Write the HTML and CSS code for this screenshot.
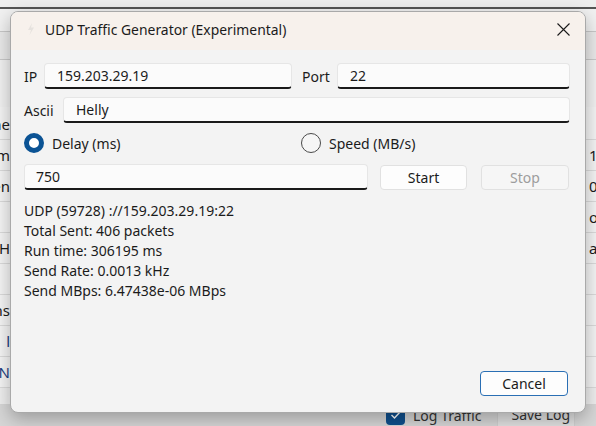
FILE: index.html
```html
<!DOCTYPE html>
<html>
<head>
<meta charset="utf-8">
<link rel="stylesheet" href="styles.css">
</head>
<body>
<div class="app">
  <div class="app-top"></div>
  <div class="app-head">
    <div class="head-a"></div>
    <div class="head-b"></div>
  </div>
  <div class="rows">
    <div class="row"><div class="lc"><span>Name</span></div><div class="rc"><span></span></div></div>
    <div class="row"><div class="lc"><span>Stream</span></div><div class="rc"><span>1'</span></div></div>
    <div class="row"><div class="lc"><span>Open</span></div><div class="rc"><span>01</span></div></div>
    <div class="row"><div class="lc"><span></span></div><div class="rc"><span>ou</span></div></div>
    <div class="row"><div class="lc"><span>H</span></div><div class="rc"><span>ac</span></div></div>
    <div class="row"><div class="lc"><span></span></div><div class="rc"><span></span></div></div>
    <div class="row"><div class="lc"><span>Options</span></div><div class="rc"><span></span></div></div>
    <div class="row"><div class="lc link"><span>l</span></div><div class="rc"><span></span></div></div>
    <div class="row"><div class="lc link"><span>N</span></div><div class="rc"><span></span></div></div>
  </div>
  <div class="app-foot">
    <span class="chk"><svg width="12" height="10" viewBox="0 0 12 10"><path d="M1.5 5 L4.5 8 L10.5 1.5" fill="none" stroke="#fff" stroke-width="1.4"/></svg></span>
    <span class="chk-label">Log Traffic</span>
    <span class="save-btn">Save Log</span>
  </div>

  <div class="dialog">
    <div class="titlebar">
      <svg class="ticon" width="8" height="12" viewBox="0 0 8 12"><path d="M5 0 L1 7 L4 7 L2.5 12 L7 4.5 L4 4.5 Z" fill="#e6e2de"/></svg>
      <span class="title">UDP Traffic Generator (Experimental)</span>
      <svg class="close" width="13" height="13" viewBox="0 0 13 13"><path d="M0.5 0.5 L12.5 12.5 M12.5 0.5 L0.5 12.5" stroke="#1a1a1a" stroke-width="1.1"/></svg>
    </div>
    <div class="body">
      <div class="frow">
        <label class="lbl ip-lbl">IP</label>
        <div class="input ip">159.203.29.19</div>
        <label class="lbl port-lbl">Port</label>
        <div class="input port">22</div>
      </div>
      <div class="frow">
        <label class="lbl ascii-lbl">Ascii</label>
        <div class="input grow">Helly</div>
      </div>
      <div class="radios">
        <div class="radio-item first"><span class="radio on"></span><span>Delay (ms)</span></div>
        <div class="radio-item"><span class="radio"></span><span>Speed (MB/s)</span></div>
      </div>
      <div class="frow delay-row">
        <div class="input delay">750</div>
        <div class="btn start">Start</div>
        <div class="btn stop">Stop</div>
      </div>
      <div class="stats">
        <div>UDP (59728) ://159.203.29.19:22</div>
        <div>Total Sent: 406 packets</div>
        <div>Run time: 306195 ms</div>
        <div>Send Rate: 0.0013 kHz</div>
        <div>Send MBps: 6.47438e-06 MBps</div>
      </div>
      <div class="footer">
        <div class="btn cancel">Cancel</div>
      </div>
    </div>
  </div>
</div>
</body>
</html>
```
FILE: styles.css
```css
* { box-sizing: border-box; }
html, body { margin: 0; padding: 0; }
body {
  font-family: "Noto Sans", "Open Sans", sans-serif;
  font-size: 13.5px;
  color: #1b1b1b;
  background: #d8d8d8;
}
.app {
  position: relative;
  width: 596px;
  height: 426px;
  overflow: hidden;
  background: #eeeeee;
}
.app-top {
  height: 9px;
  background: #eeeeee;
  border-bottom: 2px solid #555555;
}
.app-head { height: 98px; background: #f1f1f1; }
.head-a { height: 23px; border-bottom: 1px solid #c8c8c8; }
.head-b { height: 28px; border-bottom: 1px solid #c8c8c8; background: #e9e9e9; }
.rows { background: #f4f4f4; padding-top: 2px; }
.row {
  display: flex;
  justify-content: space-between;
  height: 31px;
  border-bottom: 1px solid #dadada;
  align-items: center;
}
.lc {
  width: 10px;
  overflow: hidden;
  display: flex;
  justify-content: flex-end;
  white-space: nowrap;
  font-size: 15px;
}
.lc.link { color: #1c3f80; }
.rc {
  width: 7px;
  overflow: hidden;
  white-space: nowrap;
  font-size: 15px;
}
.app-foot {
  position: absolute;
  left: 0; right: 0; top: 404px;
  height: 22px;
  display: flex;
  align-items: center;
  padding-left: 386px;
  background: #d6d6d6;
  font-size: 14px;
  white-space: nowrap;
}
.chk {
  width: 19px; height: 19px;
  background: #0f4f8c;
  border-radius: 4px;
  display: flex; align-items: center; justify-content: center;
  flex-shrink: 0;
}
.chk-label { margin-left: 8px; color: #333; }
.save-btn {
  margin-left: 16px;
  width: 78px;
  flex-shrink: 0;
  height: 24px;
  border: 1px solid #cfcfcf;
  background: #e0e0e0;
  padding-left: 13px;
  line-height: 22px;
  color: #333;
  white-space: nowrap;
}
.dialog {
  position: absolute;
  left: 10px;
  top: 11px;
  width: 576px;
  height: 402px;
  border-radius: 8px;
  border: 1px solid #a9a9a9;
  background: #f3f3f3;
  box-shadow: 0 6px 18px rgba(0,0,0,0.28);
  overflow: hidden;
  display: flex;
  flex-direction: column;
  z-index: 2;
}
.titlebar {
  height: 38px;
  background: #f7f1ec;
  display: flex;
  align-items: center;
  padding-left: 16px;
  padding-bottom: 4px;
  flex-shrink: 0;
}
.title { margin-left: 10px; font-size: 13.9px; color: #1b1b1b; }
.close { margin-left: auto; margin-right: 15px; }
.body {
  flex: 1;
  display: flex;
  flex-direction: column;
  padding: 13px 15px 15px 13px;
}
.frow {
  display: flex;
  align-items: center;
  height: 26px;
  margin-bottom: 8px;
}
.lbl { font-size: 14px; flex-shrink: 0; }
.ip-lbl { width: 20px; }
.port-lbl { width: 35px; margin-left: 10px; }
.ascii-lbl { width: 39px; }
.input {
  height: 26px;
  background: #fbfbfb;
  border: 1px solid #e6e6e6;
  border-bottom: 2px solid #1a1a1a;
  border-radius: 4px;
  padding-left: 12px;
  line-height: 23px;
  font-size: 14px;
}
.ip { width: 248px; }
.port { flex: 1; }
.grow { flex: 1; }
.radios {
  display: flex;
  align-items: center;
  height: 22px;
  margin-top: 1px;
  font-size: 14px;
}
.radio-item { display: flex; align-items: center; }
.radio-item.first { width: 277px; }
.radio {
  width: 20px; height: 20px;
  border-radius: 50%;
  border: 1px solid #4a4a4a;
  background: #f6f6f6;
  margin-right: 8px;
  flex-shrink: 0;
}
.radio.on {
  border: 5px solid #0b5394;
  background: #ffffff;
}
.delay-row { margin-top: 10px; }
.delay { width: 344px; padding-left: 11px; }
.btn {
  height: 25px;
  border: 1px solid #e1e1e1;
  border-radius: 4px;
  background: #fdfdfd;
  display: flex;
  align-items: center;
  justify-content: center;
  font-size: 14px;
}
.start { width: 87px; margin-left: 12px; }
.stop { width: 88px; margin-left: 14px; color: #9d9d9d; background: #f6f6f6; }
.stats {
  margin-top: 3px;
  line-height: 20px;
  font-size: 14px;
}
.footer {
  margin-top: auto;
  display: flex;
  justify-content: flex-end;
}
.cancel {
  width: 88px;
  border: 1px solid #2a6fb4;
  background: #fdfdfd;
  margin-bottom: 1px;
  margin-right: 2px;
}
```
